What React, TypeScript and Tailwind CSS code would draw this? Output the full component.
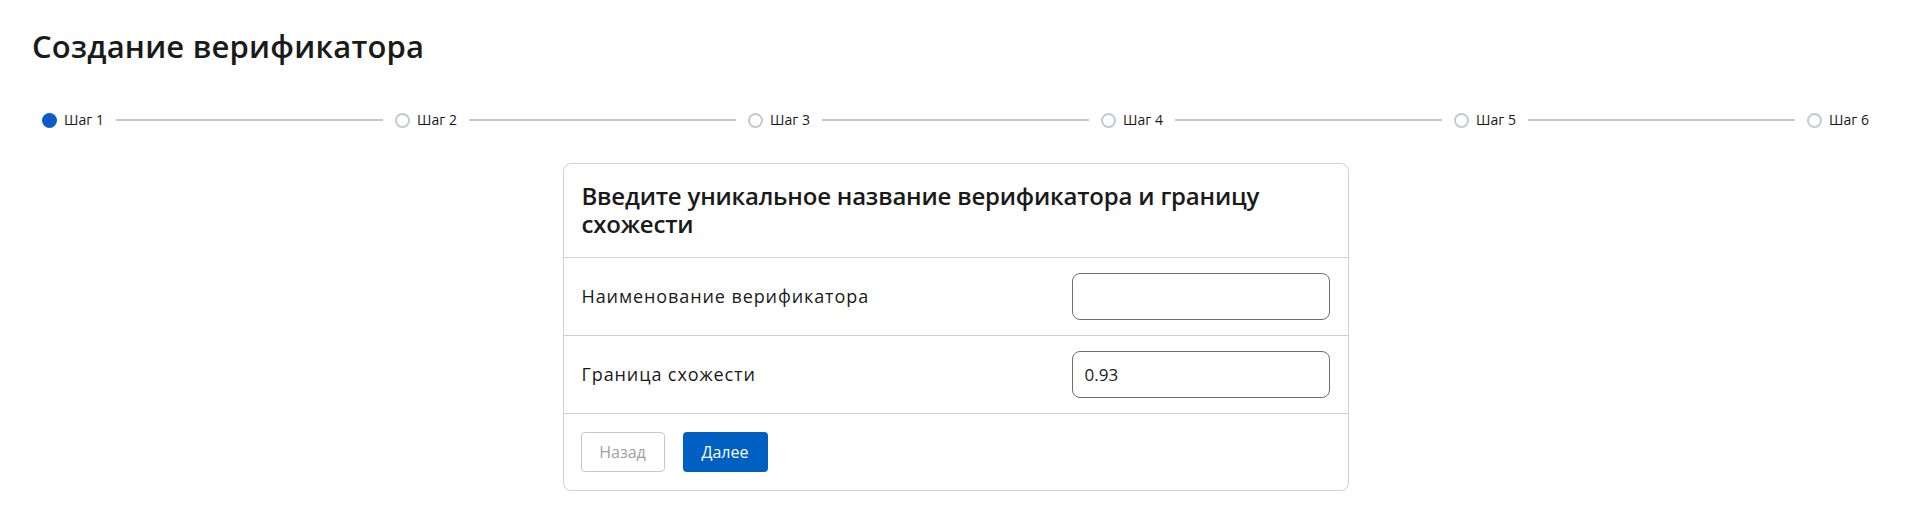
import { useState } from "react";

const steps = ["Шаг 1", "Шаг 2", "Шаг 3", "Шаг 4", "Шаг 5", "Шаг 6"];

function Stepper({ current }: { current: number }) {
    return (
        <div className="flex items-center px-[10px]">
            {steps.map((label, i) => (
                <div key={label} className={i < steps.length - 1 ? "flex flex-1 items-center" : "flex items-center"}>
                    <div className="flex items-center gap-[7px]">
                        {i === current ? (
                            <span className="block h-[15px] w-[15px] rounded-full bg-[#0b5cc6]" />
                        ) : (
                            <span className="block h-[15px] w-[15px] rounded-full border-2 border-[#c5c7d1]" />
                        )}
                        <span className="text-[14px] leading-5 text-[#1a1a1a]">{label}</span>
                    </div>
                    {i < steps.length - 1 && <div className="mx-3 h-[2px] flex-1 bg-[#c5c7d1]" />}
                </div>
            ))}
        </div>
    );
}

function Row({ label, value, onChange }: { label: string; value: string; onChange: (v: string) => void }) {
    return (
        <div className="flex items-center justify-between border-t border-[#cfd0d6] px-[18px] py-[15px]">
            <span className="text-[18px] tracking-[0.9px] text-[#1a1a1a]">{label}</span>
            <input
                value={value}
                onChange={(e) => onChange(e.target.value)}
                className="h-[47px] w-[258px] rounded-lg border border-[#6e6e78] px-3 text-[17px] text-[#1a1a1a] outline-none"
            />
        </div>
    );
}

export default function App() {
    const [name, setName] = useState("");
    const [threshold, setThreshold] = useState("0.93");

    return (
        <div className="min-h-screen bg-white px-8 pt-[28px] font-['Open_Sans',sans-serif] text-[#1a1a1a]">
            <h1 className="text-[31px] font-semibold leading-[36px] tracking-[0.2px]">Создание верификатора</h1>

            <div className="mt-[46px]">
                <Stepper current={0} />
            </div>

            <div className="mx-auto mt-[33px] w-[786px] rounded-lg border border-[#cfd0d6]">
                <div className="px-[18px] pb-[19px] pt-[18px]">
                    <h2 className="text-[24px] font-semibold leading-[28px] tracking-[-0.2px]">
                        Введите уникальное название верификатора и границу схожести
                    </h2>
                </div>
                <Row label="Наименование верификатора" value={name} onChange={setName} />
                <Row label="Граница схожести" value={threshold} onChange={setThreshold} />
                <div className="flex items-center gap-[18px] border-t border-[#cfd0d6] px-[17px] py-[18px]">
                    <button
                        disabled
                        className="h-10 w-[84px] rounded-[4px] border border-[#c8c8d0] text-[16px] text-[#a0a0a8]"
                    >
                        Назад
                    </button>
                    <button className="h-10 w-[85px] rounded-[4px] bg-[#0060c2] text-[16px] text-white">Далее</button>
                </div>
            </div>
        </div>
    );
}
